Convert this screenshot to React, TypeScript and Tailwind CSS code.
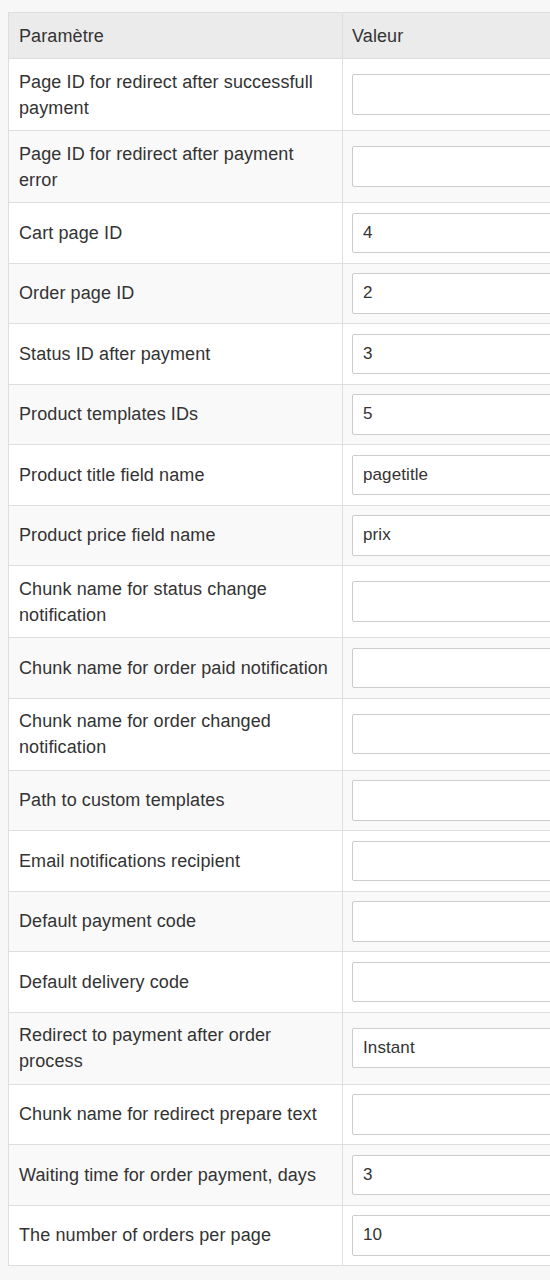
import React from "react";

type Setting = { label: string; value: string };

const settings: Setting[] = [
  { label: "Page ID for redirect after successfull payment", value: "" },
  { label: "Page ID for redirect after payment error", value: "" },
  { label: "Cart page ID", value: "4" },
  { label: "Order page ID", value: "2" },
  { label: "Status ID after payment", value: "3" },
  { label: "Product templates IDs", value: "5" },
  { label: "Product title field name", value: "pagetitle" },
  { label: "Product price field name", value: "prix" },
  { label: "Chunk name for status change notification", value: "" },
  { label: "Chunk name for order paid notification", value: "" },
  { label: "Chunk name for order changed notification", value: "" },
  { label: "Path to custom templates", value: "" },
  { label: "Email notifications recipient", value: "" },
  { label: "Default payment code", value: "" },
  { label: "Default delivery code", value: "" },
  { label: "Redirect to payment after order process", value: "Instant" },
  { label: "Chunk name for redirect prepare text", value: "" },
  { label: "Waiting time for order payment, days", value: "3" },
  { label: "The number of orders per page", value: "10" },
];

const font = { fontFamily: '"Liberation Sans", Arial, sans-serif' };

export default function App() {
  return (
    <div
      className="min-h-[1280px] w-[550px] overflow-hidden bg-[#f7f7f7] pt-[12px] pl-[8px] text-[18px] leading-[26px] tracking-[0.1px] text-[#333]"
      style={font}
    >
      <table className="w-[720px] table-fixed border-collapse border border-[#dedede] bg-white">
        <colgroup>
          <col className="w-[334px]" />
          <col />
        </colgroup>
        <thead>
          <tr className="bg-[#ebebeb]">
            <th className="border border-[#dedede] px-[10px] py-[9.5px] text-left font-normal">Paramètre</th>
            <th className="border border-[#dedede] px-[9px] py-[9.5px] text-left font-normal">Valeur</th>
          </tr>
        </thead>
        <tbody>
          {settings.map((s, i) => (
            <tr key={s.label} className={i % 2 === 1 ? "bg-[#f9f9f9]" : "bg-white"}>
              <td className="border border-[#dedede] px-[10px] py-[9.5px] align-middle">{s.label}</td>
              <td className="border border-[#dedede] px-[9px] py-[9.5px] align-middle">
                <input
                  type="text"
                  defaultValue={s.value}
                  className="block h-[40.5px] w-full rounded-[2px] border border-[#cccccc] bg-white px-[10px] text-[17px] text-[#333] outline-none"
                  style={font}
                />
              </td>
            </tr>
          ))}
        </tbody>
      </table>
    </div>
  );
}
